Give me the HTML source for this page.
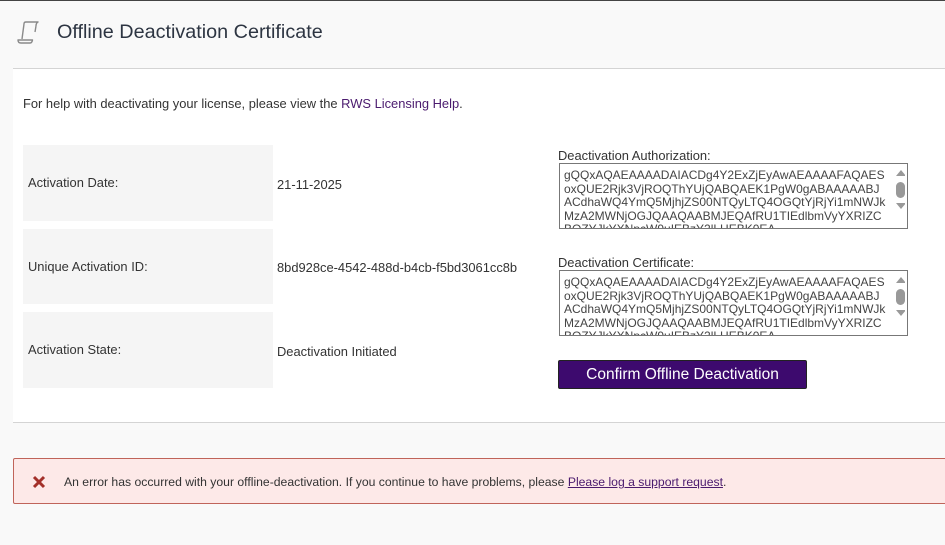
<!DOCTYPE html>
<html><head><style>
body{margin:0;width:945px;height:545px;background:#f9f9f9;font-family:"Liberation Sans",sans-serif;position:relative;overflow:hidden;color:#333}
.abs{position:absolute}
.top{left:0;top:0;width:945px;height:1px;background:#444}
h1{position:absolute;left:57px;top:21px;margin:0;font-weight:normal;font-size:19.8px;color:#2d3542}
.panel{left:13px;top:68px;width:932px;height:353px;background:#fff;border-top:1px solid #d4d4d4;border-bottom:1px solid #d4d4d4}
.help{left:23px;top:96px;font-size:12.9px}
.help a{color:#4a1a6e;text-decoration:none}
.cell{left:23px;width:250px;height:76px;background:#f5f5f5;font-size:12.9px;line-height:76px;text-indent:5px}
.val{left:277px;font-size:12.9px}
.lbl{left:558px;font-size:12.9px}
.ta{left:559px;width:349px;height:66px;border:1px solid #777;background:#fff;font-size:12px;line-height:13.6px;overflow:hidden;box-sizing:border-box;padding:5px 0 0 4px;white-space:pre;color:#444;position:absolute}
.sb{position:absolute;right:2px;top:3px;width:10px}
.btn{left:558px;top:360px;width:247px;height:27px;background:#3d0a6e;color:#fff;font-size:15.5px;text-align:center;line-height:27px;border-radius:2px;border:1px solid #222}
.err{left:13px;top:458px;width:940px;height:44px;background:#fde9e8;border:1px solid #c0645a;border-radius:2px}
.err span{position:absolute;left:50px;top:16px;font-size:12.2px;color:#333}
.err a{color:#4a1a6e;text-decoration:underline}
</style></head><body>
<div class="abs top"></div>
<svg class="abs" style="left:16px;top:20px" width="24" height="25" viewBox="0 0 24 25" fill="none" stroke="#8a8a8a" stroke-width="1.4" stroke-linejoin="round"><path d="M8 4 Q8 2 10 2 H22 Q20 3 20 6"/><path d="M8 4 L6 19"/><path d="M20 6 L19 12"/><path d="M2 20 Q2 23 5 23 H14 Q16 23 16.5 20 Z"/></svg>
<h1>Offline Deactivation Certificate</h1>
<div class="abs panel"></div>
<div class="abs help">For help with deactivating your license, please view the <a>RWS Licensing Help</a>.</div>
<div class="abs cell" style="top:145px">Activation Date:</div>
<div class="abs cell" style="top:229px;height:75px;line-height:75px">Unique Activation ID:</div>
<div class="abs cell" style="top:312px">Activation State:</div>
<div class="abs val" style="top:177px">21-11-2025</div>
<div class="abs val" style="top:260px">8bd928ce-4542-488d-b4cb-f5bd3061cc8b</div>
<div class="abs val" style="top:344px">Deactivation Initiated</div>
<div class="abs lbl" style="top:148px">Deactivation Authorization:</div>
<div class="ta" style="top:163px">gQQxAQAEAAAADAIACDg4Y2ExZjEyAwAEAAAAFAQAES
oxQUE2Rjk3VjROQThYUjQABQAEK1PgW0gABAAAAABJ
ACdhaWQ4YmQ5MjhjZS00NTQyLTQ4OGQtYjRjYi1mNWJk
MzA2MWNjOGJQAAQAABMJEQAfRU1TIEdlbmVyYXRIZC
BQZYJkYXNpcW9uIEBzY2lLHEBK0EA<svg class="sb" width="12" height="62"><path d="M1 9 L6 3 L11 9Z" fill="#999"/><rect x="1" y="15" width="9" height="16" rx="4.5" fill="#999"/><path d="M1 36 L6 42 L11 36Z" fill="#999"/></svg></div>
<div class="abs lbl" style="top:255px">Deactivation Certificate:</div>
<div class="ta" style="top:270px">gQQxAQAEAAAADAIACDg4Y2ExZjEyAwAEAAAAFAQAES
oxQUE2Rjk3VjROQThYUjQABQAEK1PgW0gABAAAAABJ
ACdhaWQ4YmQ5MjhjZS00NTQyLTQ4OGQtYjRjYi1mNWJk
MzA2MWNjOGJQAAQAABMJEQAfRU1TIEdlbmVyYXRIZC
BQZYJkYXNpcW9uIEBzY2lLHEBK0EA<svg class="sb" width="12" height="62"><path d="M1 9 L6 3 L11 9Z" fill="#999"/><rect x="1" y="15" width="9" height="16" rx="4.5" fill="#999"/><path d="M1 36 L6 42 L11 36Z" fill="#999"/></svg></div>
<div class="abs btn">Confirm Offline Deactivation</div>
<div class="abs err"><svg style="position:absolute;left:18px;top:16px" width="14" height="14"><path d="M2 2 L12 12 M12 2 L2 12" stroke="#a3302a" stroke-width="3"/></svg><span>An error has occurred with your offline-deactivation. If you continue to have problems, please <a>Please log a support request</a>.</span></div>
</body></html>
